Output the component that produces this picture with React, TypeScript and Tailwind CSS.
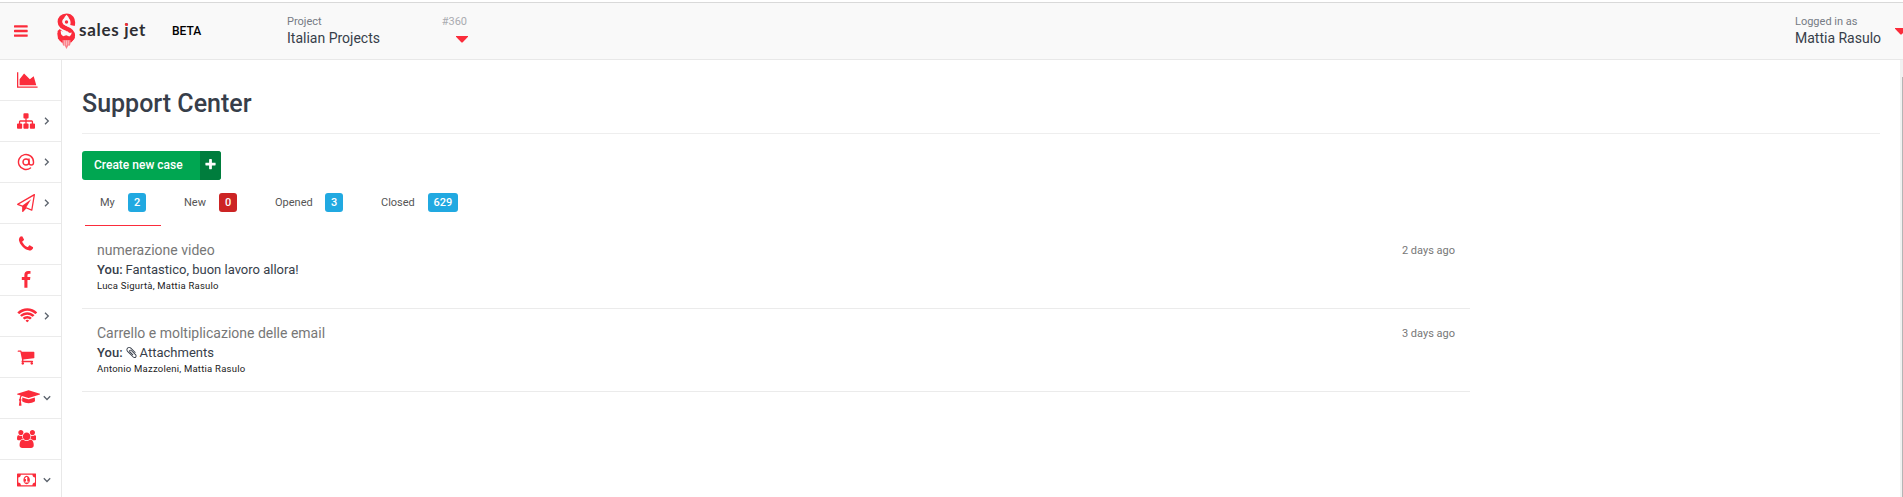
import type { ReactNode } from "react";
import { AtSign } from "lucide-react";

const RED = "text-[#fb2c3b]";

type Glyph = { w: number; d: string };

const G: Record<string, Glyph> = {
  bars: { w: 1536, d: "M1536 1344v128q0 26-19 45t-45 19h-1408q-26 0-45-19t-19-45v-128q0-26 19-45t45-19h1408q26 0 45 19t19 45zm0-512v128q0 26-19 45t-45 19h-1408q-26 0-45-19t-19-45v-128q0-26 19-45t45-19h1408q26 0 45 19t19 45zm0-512v128q0 26-19 45t-45 19h-1408q-26 0-45-19t-19-45v-128q0-26 19-45t45-19h1408q26 0 45 19t19 45z" },
  area: { w: 2048, d: "M2048 1536v128h-2048v-1536h128v1408h1920zm-384-1024l256 896h-1664v-576l448-576 576 576z" },
  sitemap: { w: 1792, d: "M1792 1248v320q0 40-28 68t-68 28h-320q-40 0-68-28t-28-68v-320q0-40 28-68t68-28h96v-192h-512v192h96q40 0 68 28t28 68v320q0 40-28 68t-68 28h-320q-40 0-68-28t-28-68v-320q0-40 28-68t68-28h96v-192h-512v192h96q40 0 68 28t28 68v320q0 40-28 68t-68 28h-320q-40 0-68-28t-28-68v-320q0-40 28-68t68-28h96v-192q0-52 38-90t90-38h512v-192h-96q-40 0-68-28t-28-68v-320q0-40 28-68t68-28h320q40 0 68 28t28 68v320q0 40-28 68t-68 28h-96v192h512q52 0 90 38t38 90v192h96q40 0 68 28t28 68z" },
  plane: { w: 1792, d: "M1764 11q33 24 27 64l-256 1536q-5 29-32 45-14 8-31 8-11 0-24-5l-527-215-298 327q-18 21-47 21-14 0-23-4-19-7-30-23.5t-11-36.5v-452l-472-193q-37-14-40-55-3-39 32-59l1664-960q35-21 68 2zm-342 1499l221-1323-1434 827 336 137 863-639-478 797z" },
  phone: { w: 1792, d: "M1600 1240q0 27-10 70.5t-21 68.5q-21 50-122 106-94 51-186 51-27 0-53-3.5t-57.5-12.5-47-14.5-55.5-20.5-49-18q-98-35-175-83-127-79-264-216t-216-264q-48-77-83-175-3-9-18-49t-20.5-55.5-14.5-47-12.5-57.5-3.5-53q0-92 51-186 56-101 106-122 25-11 68.5-21t70.5-10q14 0 21 3 18 6 53 76 11 19 30 54t35 63.5 31 53.5q3 4 17.5 25t21.5 35.5 7 28.5q0 20-28.5 50t-62 55-62 53-28.5 46q0 9 5 22.5t8.5 20.5 14 24 11.5 19q76 137 174 235t235 174q2 1 19 11.5t24 14 20.5 8.5 22.5 5q18 0 46-28.5t53-62 55-62 50-28.5q14 0 28.5 7t35.5 21.5 25 17.5q25 15 53.5 31t63.5 35 54 30q70 35 76 53 3 7 3 21z" },
  facebook: { w: 1792, d: "M1343 12v264h-157q-86 0-116 36t-30 108v189h293l-39 296h-254v759h-306v-759h-255v-296h255v-218q0-186 104-288.5t277-102.5q147 0 228 12z" },
  wifi: { w: 2048, d: "M1024 1523q-20 0-93-73.5t-73-93.5q0-32 62.5-54t103.5-22 103.5 22 62.5 54q0 20-73 93.5t-93 73.5zm270-271q-2 0-40-25t-101.5-50-128.5-25-128.5 25-101 50-40.5 25q-18 0-93.5-75t-75.5-93q0-13 10-23 78-77 196-121t233-44 233 44 196 121q10 10 10 23 0 18-75.5 93t-93.5 75zm273-272q-11 0-23-8-136-105-252-154.5t-268-49.5q-85 0-170.5 22t-149 53-113.5 62-79 53-31 22q-17 0-92-75t-75-93q0-12 10-22 132-132 320-205t380-73 380 73 320 205q10 10 10 22 0 18-75 93t-92 75zm271-271q-11 0-22-9-179-157-371.5-236.5t-420.5-79.5-420.5 79.5-371.5 236.5q-11 9-22 9-17 0-92.5-75t-75.5-93q0-13 10-23 187-186 445-288t527-102 527 102 445 288q10 10 10 23 0 18-75.5 93t-92.5 75z" },
  cart: { w: 1792, d: "M704 1536q0 52-38 90t-90 38-90-38-38-90 38-90 90-38 90 38 38 90zm896 0q0 52-38 90t-90 38-90-38-38-90 38-90 90-38 90 38 38 90zm128-1088v512q0 24-16.5 42.5t-40.5 21.5l-1044 122q13 60 13 70 0 16-24 64h920q26 0 45 19t19 45-19 45-45 19h-1024q-26 0-45-19t-19-45q0-11 8-31.5t16-36 21.5-40 15.5-29.5l-177-823h-204q-26 0-45-19t-19-45 19-45 45-19h256q16 0 28.5 6.5t19.5 15.5 13 24.5 8 26 5.5 29.5 4.5 26h1201q26 0 45 19t19 45z" },
  cap: { w: 2304, d: "M1774 836l18 316q4 69-82 128t-235 93.5-323 34.5-323-34.5-235-93.5-82-128l18-316 574 181q22 7 48 7t48-7zm530-324q0 23-22 31l-1120 352q-4 1-10 1t-10-1l-652-206q-43 34-71 111.5t-34 178.5q63 36 63 109 0 69-58 107l58 433q2 14-8 25-9 11-24 11h-192q-15 0-24-11-10-11-8-25l58-433q-58-38-58-107 0-73 65-111 11-207 98-330l-333-104q-22-8-22-31t22-31l1120-352q4-1 10-1t10 1l1120 352q22 8 22 31z" },
  users: { w: 1920, d: "M593 896q-162 5-265 128h-134q-82 0-138-40.5t-56-118.5q0-353 124-353 6 0 43.5 21t97.5 42.5 119 21.5q67 0 133-23-5 37-5 66 0 139 81 256zm1071 637q0 120-73 189.5t-194 69.5h-874q-121 0-194-69.5t-73-189.5q0-53 3.5-103.5t14-109 26.5-108.5 43-97.5 62-81 85.5-53.5 111.5-20q10 0 43 21.5t73 48 107 48 135 21.5 135-21.5 107-48 73-48 43-21.5q61 0 111.5 20t85.5 53.5 62 81 43 97.5 26.5 108.5 14 109 3.5 103.5zm-1024-1277q0 106-75 181t-181 75-181-75-75-181 75-181 181-75 181 75 75 181zm704 384q0 159-112.5 271.5t-271.5 112.5-271.5-112.5-112.5-271.5 112.5-271.5 271.5-112.5 271.5 112.5 112.5 271.5zm576 225q0 78-56 118.5t-138 40.5h-134q-103-123-265-128 81-117 81-256 0-29-5-66 66 23 133 23 59 0 119-21.5t97.5-42.5 43.5-21q124 0 124 353zm-128-609q0 106-75 181t-181 75-181-75-75-181 75-181 181-75 181 75 75 181z" },
  money: { w: 1920, d: "M768 1152h384v-96h-128v-448h-114l-148 137 77 80q42-37 55-57h2v288h-128v96zm512-256q0 70-21 142t-59.5 134-101.5 101-138 39-138-39-101.5-101-59.5-134-21-142 21-142 59.5-134 101.5-101 138-39 138 39 101.5 101 59.5 134 21 142zm512 256v-512q-106 0-181-75t-75-181h-1152q0 106-75 181t-181 75v512q106 0 181 75t75 181h1152q0-106 75-181t181-75zm128-832v1152q0 26-19 45t-45 19h-1792q-26 0-45-19t-19-45v-1152q0-26 19-45t45-19h1792q26 0 45 19t19 45z" },
  plus: { w: 1792, d: "M1600 736v192q0 40-28 68t-68 28h-416v416q0 40-28 68t-68 28h-192q-40 0-68-28t-28-68v-416h-416q-40 0-68-28t-28-68v-192q0-40 28-68t68-28h416v-416q0-40 28-68t68-28h192q40 0 68 28t28 68v416h416q40 0 68 28t28 68z" },
  clip: { w: 1792, d: "M1596 1385q0 117-79 196t-196 79q-135 0-235-100l-777-776q-113-115-113-271 0-159 110-270t269-111q158 0 273 113l605 606q10 10 10 22 0 16-30.5 46.5t-46.5 30.5q-13 0-23-10l-606-607q-79-77-181-77-106 0-179 75t-73 181q0 105 76 181l776 777q63 63 145 63 64 0 106-42t42-106q0-82-63-145l-581-581q-26-24-60-24-29 0-48 19t-19 48q0 32 25 59l410 410q10 10 10 22 0 16-31 47t-47 31q-12 0-22-10l-410-410q-63-61-63-149 0-82 57-139t139-57q88 0 149 63l581 581q100 98 100 235z" },
};

function Icon({ name, size }: { name: string; size: number }) {
  const g = G[name];
  return (
    <svg className="shrink-0" width={(g.w / 1792) * size} height={size} viewBox={`0 0 ${g.w} 1792`} fill="currentColor">
      <path d={g.d} />
    </svg>
  );
}

function Chevron({ dir }: { dir: "right" | "down" }) {
  return (
    <svg width="8" height="8" viewBox="0 0 8 8" fill="none" stroke="#5b626c" strokeWidth="1.3">
      <path d={dir === "right" ? "M2 .8L5.3 4L2 7.2" : "M.8 2.3L4 5.5L7.2 2.3"} />
    </svg>
  );
}

function Logo() {
  return (
    <svg className="shrink-0" width="19" height="37" viewBox="0 0 19 37">
      <g fill="none" stroke="#fb2c3b" strokeWidth="4.6">
        <path d="M15.500 12.500C17 6 13.500 2.700 9.500 2.700 5 2.700 2.900 5.500 2.900 8.800c0 4 3.100 5.200 6.600 6.700 4 1.700 6.300 3.200 6.300 6.800 0 3.600-2.800 5.200-6.300 5.200-4.500 0-7-2-6.700-7.500" />
      </g>
      <path fill="#fb2c3b" d="M.6 18l2.200-2 3.400 3 3.200-.7 3 1.700 3.500-.4 2 5-3.400 4.600-5 1.200-5-1L.9 25.500z" />
      <path fill="#f9f9f9" d="M9.500 1.800c2.700 2.600 4 6 3.500 10.600l-2.600 1.200-4.400-2.600C5.800 7.500 6.900 4.300 9.500 1.800zM3.600 17.800l2.200.8 2.800-.9 4 2.200 2.200-.3-.8 2.400-1.700 1.600-3-1.300-3.200 1-2-2z" />
      <circle cx="9.500" cy="9" r="1.700" fill="#fb2c3b" />
      <path fill="#fb2c3b" d="M5 12.500l6 2.400-1.500 2.800L5 15z" />
      <path fill="#fb7d86" d="M5.500 27h8v4l-1.200 2-.9-.8-1.900 3.800-1.900-3.800-.9.800L5.500 31z" />
      <path stroke="#fdd3d6" strokeWidth=".7" d="M7.700 27.500v5M9.500 27.500v5M11.300 27.500v4" />
    </svg>
  );
}

const NAV: { icon: string; chev?: "right" | "down"; short?: boolean }[] = [
  { icon: "area" },
  { icon: "sitemap", chev: "right" },
  { icon: "at", chev: "right" },
  { icon: "plane", chev: "right" },
  { icon: "phone" },
  { icon: "facebook", short: true },
  { icon: "wifi", chev: "right" },
  { icon: "cart" },
  { icon: "cap", chev: "down" },
  { icon: "users" },
  { icon: "money", chev: "down" },
];

function Tab({ label, count, className, red, active }: { label: string; count: number; className: string; red?: boolean; active?: boolean }) {
  return (
    <div className={`flex h-[41px] items-start justify-between border-b pt-2 pl-[15px] pr-[15px] ${active ? "border-[#fb2c3b]" : "border-transparent"} ${className}`}>
      <span className="text-[11px] leading-[19px] text-[#555]">{label}</span>
      <span className={`h-[19px] rounded-[3px] px-[5.8px] text-[11px] font-medium leading-[19px] text-white ${red ? "bg-[#cc2424]" : "bg-[#21a9e1]"}`}>{count}</span>
    </div>
  );
}

function Case({ title, body, people, time }: { title: string; body: ReactNode; people: string; time: string }) {
  return (
    <div className="flex h-[83px] justify-between border-b border-[#ebebeb] pt-[14px] pr-[15px] pl-[15px]">
      <div>
        <div className="text-[14px] leading-5 text-[#777]">{title}</div>
        <div className="flex items-center text-[13px] leading-[19px] text-[#373e4a]">
          <span className="mr-[3px] font-medium">You:</span>
          {body}
        </div>
        <div className="text-[9.500px] leading-[13px] tracking-[0.23px] text-[#222]">{people}</div>
      </div>
      <div className="pt-px text-[11px] leading-5 text-[#777]">{time}</div>
    </div>
  );
}

function Triangle() {
  return (
    <svg width="12" height="7" viewBox="0 0 12 7" fill="#fb2c3b">
      <path d="M0 0h12v.7L6.500 6.500h-1L0 .7z" />
    </svg>
  );
}

export default function App() {
  return (
    <div className="flex h-[497px] w-full flex-col overflow-hidden bg-white font-[Roboto,sans-serif]">
      <header className="mt-0.5 flex h-[58px] shrink-0 border-y border-t-[#d9d9d9] border-b-[#e8e8e8] bg-[#f9f9f9]">
        <div className={`mt-5 w-[43px] pl-3.5 ${RED}`}>
          <Icon name="bars" size={16} />
        </div>
        <div className="mt-[10px] ml-3.5 flex w-[115px]">
          <Logo />
          <span className="mt-[5px] ml-[3px] font-[Lato,sans-serif] text-[17px] leading-6 font-bold tracking-[0.7px] whitespace-nowrap text-[#2f2f33]">
            sales <span className="relative">j<i className="absolute top-[4px] right-px size-[3px] rounded-full bg-[#fb2c3b]" /></span>et
          </span>
        </div>
        <div className="mt-[18px] w-[115px] text-[12px] leading-5 font-medium text-black">BETA</div>
        <div className="mt-2.5 flex w-[180px] justify-between">
          <div>
            <div className="pt-px text-[11px] leading-4 text-[#767b84]">Project</div>
            <div className="text-[14px] leading-[17px] text-[#373e4a]">Italian Projects</div>
          </div>
          <div className="flex flex-col items-end">
            <div className="pt-px text-[11px] leading-4 text-[#a9abb0]">#360</div>
            <div className="mt-[6px] -mr-px"><Triangle /></div>
          </div>
        </div>
        <div className="mt-2.5 mr-[-4px] ml-auto flex w-[112px] justify-between">
          <div>
            <div className="pt-px text-[11px] leading-4 text-[#767b84]">Logged in as</div>
            <div className="text-[14px] leading-[17px] text-[#373e4a]">Mattia Rasulo</div>
          </div>
          <div className="mt-[15px]"><Triangle /></div>
        </div>
      </header>
      <div className="flex min-h-0 flex-1">
        <nav className="w-[62px] shrink-0 overflow-hidden border-r border-[#e8e8e8]">
          {NAV.map((n) => (
            <div key={n.icon} className={`flex items-center border-b border-[#ebebeb] pb-px pl-[17px] ${RED} ${n.short ? "h-[31px]" : "h-[41px]"}`}>
              <div className="w-[26px] shrink-0">
                {n.icon === "at" ? <AtSign size={18} strokeWidth={1.900} /> : <Icon name={n.icon} size={18} />}
              </div>
              {n.chev && <Chevron dir={n.chev} />}
            </div>
          ))}
        </nav>
        <main className="flex-1 pr-5 pl-5">
          <h1 className="h-[74px] border-b border-[#eee] pt-[27px] text-[25px] leading-[33px] font-medium text-[#373e4a]">Support Center</h1>
          <button className="mt-[17px] flex h-[29px] w-[139px] overflow-hidden rounded-[3px] bg-[#00a651] text-white">
            <span className="w-[118px] pl-3 text-left text-[12px] leading-[28px] font-medium">Create new case</span>
            <span className="flex h-full w-[21px] items-center justify-center bg-[#007d3d] pb-[3px]"><Icon name="plus" size={13} /></span>
          </button>
          <div className="mt-[5px] ml-[3px] flex">
            <Tab label="My" count={2} className="w-[76px]" active />
            <Tab label="New" count={0} className="ml-2 w-[83px]" red />
            <Tab label="Opened" count={3} className="ml-2 w-[98px]" />
            <Tab label="Closed" count={629} className="ml-2 w-[107px]" />
          </div>
          <div className="w-[1388px]">
            <Case title="numerazione video" body="Fantastico, buon lavoro allora!" people="Luca Sigurtà, Mattia Rasulo" time="2 days ago" />
            <Case
              title="Carrello e moltiplicazione delle email"
              body={<><span className="-ml-px"><Icon name="clip" size={13} /></span><span className="ml-0.5">Attachments</span></>}
              people="Antonio Mazzoleni, Mattia Rasulo"
              time="3 days ago"
            />
          </div>
        </main>
        <div className="w-[3px] bg-[#f1f1f1] pt-[17px] pl-0.5">
          <div className="h-full bg-[#b5b5b5]" />
        </div>
      </div>
    </div>
  );
}
